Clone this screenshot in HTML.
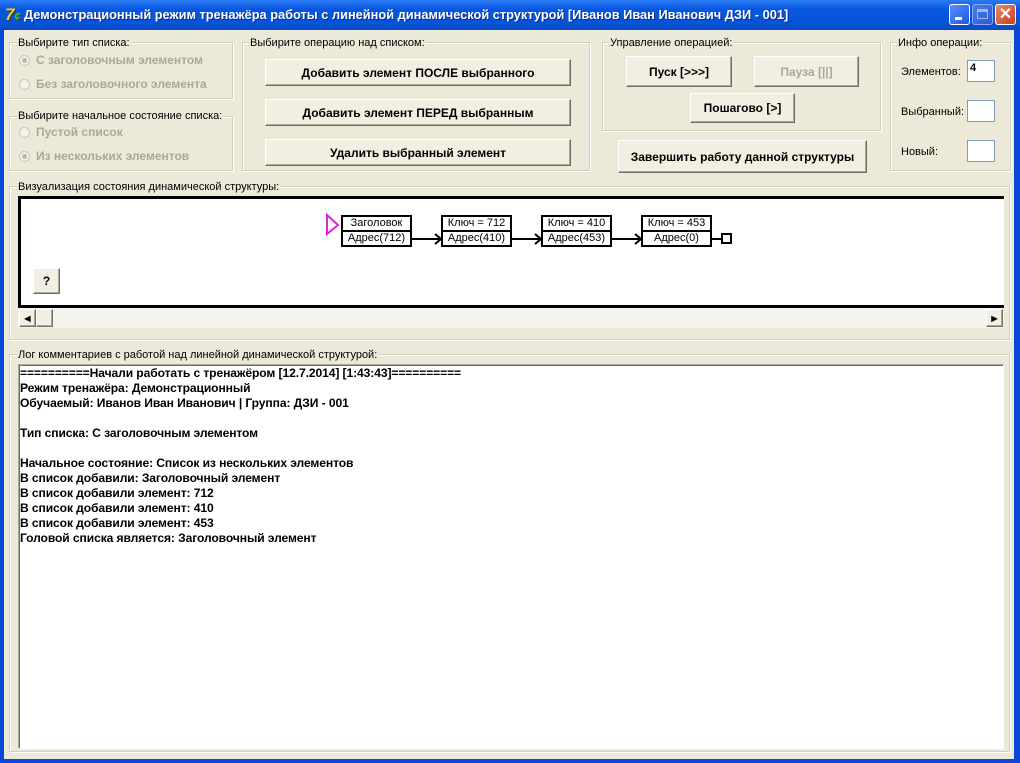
<!DOCTYPE html>
<html><head><meta charset="utf-8"><style>
*{margin:0;padding:0;box-sizing:border-box}
body{width:1020px;height:763px;overflow:hidden;background:#0a46d8;font-family:"Liberation Sans",sans-serif;position:relative}
.a{position:absolute}
#client{left:4px;top:30px;width:1010px;height:729px;background:#ece9d8}
.title{left:0;top:0;width:1020px;height:30px;background:linear-gradient(#2a7bf5,#0857e0 30%,#0654d6 80%,#0a46c0);color:#fff;font-weight:bold;font-size:12.8px;line-height:30px;padding-left:24px;white-space:nowrap;text-shadow:1px 1px #0a2c8a}
.gb{border:1px solid #d0d0bf;box-shadow:inset 1px 1px 0 #fff,1px 1px 0 #fff}
.gl{background:#ece9d8;font-size:11px;color:#000;padding:0 1px;line-height:12px;white-space:nowrap}
.btn{background:#f1efe2;border:1px solid;border-color:#fff #716f64 #716f64 #fff;box-shadow:inset -1px -1px 0 #aca899;font-weight:bold;font-size:12px;text-align:center;display:flex;align-items:center;justify-content:center;white-space:nowrap}
.rad{font-size:12px;font-weight:bold;color:#aca899;white-space:nowrap;line-height:14px}
.rad i{display:inline-block;width:11px;height:11px;border-radius:50%;border:1px solid #c9c7ba;vertical-align:-2px;margin-right:6px;position:relative;background:#f5f4ea}
.rad i.on:after{content:"";position:absolute;left:2px;top:2px;width:5px;height:5px;border-radius:50%;background:#b8b6a8}
.edit{background:#fff;border:1px solid #7f9db9;font-size:11px;font-weight:bold;padding-left:2px}
.lbl{font-size:11px;white-space:nowrap}
.node{border:2px solid #000;background:#fff;width:71px;height:32px;font-size:11px;text-align:center;line-height:13px}
.node div:first-child{border-bottom:2px solid #000;height:15px}
.log{font-weight:bold;font-size:12.1px;line-height:15px;white-space:pre;letter-spacing:-0.1px}
</style></head><body>
<div class="a title">Демонстрационный режим тренажёра работы с линейной динамической структурой [Иванов Иван Иванович ДЗИ - 001]</div>
<div class="a" style="left:5px;top:6px;width:16px;height:18px;color:#f2d21e;font-weight:bold;font-style:italic;font-size:17px;line-height:18px;text-shadow:1px 1px #333">7<span style="color:#4bb84b;font-size:11px">¢</span></div>
<div class="a" style="left:949px;top:4px;width:21px;height:21px;border:1px solid #fff;border-radius:3px;background:linear-gradient(135deg,#5a8ff8,#1e55e0)"><div class="a" style="left:5px;top:12px;width:7px;height:3px;background:#fff"></div></div>
<div class="a" style="left:972px;top:4px;width:21px;height:21px;border:1px solid #8aa8f0;border-radius:3px;background:linear-gradient(135deg,#4a7de8,#2a5ad8)"><div class="a" style="left:4px;top:4px;width:11px;height:10px;border:1px solid #9cb6f0;border-top-width:3px"></div></div>
<div class="a" style="left:995px;top:4px;width:21px;height:21px;border:1px solid #fff;border-radius:3px;background:linear-gradient(135deg,#e88a6a,#c8401c);color:#fff;font-size:16px;font-weight:bold;text-align:center;line-height:19px">✕</div>
<div class="a" id="client"></div>

<div class="a gb" style="left:9px;top:42px;width:224px;height:57px"></div>
<div class="a gl" style="left:17px;top:37px">Выбирите тип списка:</div>
<div class="a rad" style="left:19px;top:53px"><i class="on"></i>С заголовочным элементом</div>
<div class="a rad" style="left:19px;top:77px"><i></i>Без заголовочного элемента</div>
<div class="a gb" style="left:9px;top:116px;width:224px;height:55px"></div>
<div class="a gl" style="left:17px;top:110px">Выбирите начальное состояние списка:</div>
<div class="a rad" style="left:19px;top:125px"><i></i>Пустой список</div>
<div class="a rad" style="left:19px;top:149px"><i class="on"></i>Из нескольких элементов</div>

<div class="a gb" style="left:242px;top:42px;width:348px;height:129px"></div>
<div class="a gl" style="left:249px;top:37px">Выбирите операцию над списком:</div>
<div class="a btn" style="left:265px;top:59px;width:306px;height:27px">Добавить элемент ПОСЛЕ выбранного</div>
<div class="a btn" style="left:265px;top:99px;width:306px;height:27px">Добавить элемент ПЕРЕД выбранным</div>
<div class="a btn" style="left:265px;top:139px;width:306px;height:27px">Удалить выбранный элемент</div>

<div class="a gb" style="left:602px;top:42px;width:279px;height:89px"></div>
<div class="a gl" style="left:609px;top:37px">Управление операцией:</div>
<div class="a btn" style="left:626px;top:56px;width:106px;height:31px">Пуск [&gt;&gt;&gt;]</div>
<div class="a btn" style="left:754px;top:56px;width:105px;height:31px;color:#aca899">Пауза [||]</div>
<div class="a btn" style="left:690px;top:93px;width:105px;height:30px">Пошагово [&gt;]</div>
<div class="a btn" style="left:618px;top:140px;width:249px;height:33px">Завершить работу данной структуры</div>

<div class="a gb" style="left:890px;top:42px;width:121px;height:129px"></div>
<div class="a gl" style="left:897px;top:37px">Инфо операции:</div>
<div class="a lbl" style="left:901px;top:66px">Элементов:</div>
<div class="a lbl" style="left:901px;top:106px">Выбранный:</div>
<div class="a lbl" style="left:901px;top:146px">Новый:</div>
<div class="a edit" style="left:967px;top:60px;width:28px;height:22px;line-height:14px">4</div>
<div class="a edit" style="left:967px;top:100px;width:28px;height:22px"></div>
<div class="a edit" style="left:967px;top:140px;width:28px;height:22px"></div>

<div class="a gb" style="left:9px;top:186px;width:1001px;height:154px"></div>
<div class="a gl" style="left:17px;top:181px">Визуализация состояния динамической структуры:</div>
<div class="a" style="left:18px;top:196px;width:986px;height:112px;background:#fff;border-top:3px solid #000;border-bottom:3px solid #000;border-left:3px solid #000"></div>
<svg class="a" style="left:0;top:0" width="1020" height="330">
<polygon points="327,215 338,225 327,234" fill="none" stroke="#e020e0" stroke-width="2"/>
<g stroke="#000" stroke-width="2" fill="none">
<line x1="412" y1="239" x2="441" y2="239"/><polyline points="435,234 441,239 435,244"/>
<line x1="512" y1="239" x2="541" y2="239"/><polyline points="535,234 541,239 535,244"/>
<line x1="612" y1="239" x2="641" y2="239"/><polyline points="635,234 641,239 635,244"/>
<line x1="712" y1="239" x2="722" y2="239"/><rect x="722" y="234" width="9" height="9"/>
</g></svg>
<div class="a node" style="left:341px;top:215px"><div>Заголовок</div><div>Адрес(712)</div></div>
<div class="a node" style="left:441px;top:215px"><div>Ключ = 712</div><div>Адрес(410)</div></div>
<div class="a node" style="left:541px;top:215px"><div>Ключ = 410</div><div>Адрес(453)</div></div>
<div class="a node" style="left:641px;top:215px"><div>Ключ = 453</div><div>Адрес(0)</div></div>
<div class="a btn" style="left:33px;top:268px;width:27px;height:26px">?</div>
<div class="a" style="left:18px;top:308px;width:986px;height:20px;background:#f4f3ee"></div>
<div class="a btn" style="left:19px;top:309px;width:17px;height:18px;font-size:8px">◀</div>
<div class="a btn" style="left:36px;top:309px;width:17px;height:18px"></div>
<div class="a btn" style="left:986px;top:309px;width:17px;height:18px;font-size:8px">▶</div>

<div class="a gb" style="left:9px;top:354px;width:1001px;height:398px"></div>
<div class="a gl" style="left:17px;top:349px">Лог комментариев с работой над линейной динамической структурой:</div>
<div class="a" style="left:18px;top:364px;width:986px;height:385px;background:#fff;border:1px solid #aca899;border-right-color:#fff;border-bottom-color:#fff;box-shadow:inset 1px 1px 0 #716f64"></div>
<div class="a log" style="left:20px;top:366px">==========Начали работать с тренажёром [12.7.2014] [1:43:43]==========
Режим тренажёра: Демонстрационный
Обучаемый: Иванов Иван Иванович | Группа: ДЗИ - 001

Тип списка: С заголовочным элементом

Начальное состояние: Список из нескольких элементов
В список добавили: Заголовочный элемент
В список добавили элемент: 712
В список добавили элемент: 410
В список добавили элемент: 453
Головой списка является: Заголовочный элемент</div>
</body></html>
